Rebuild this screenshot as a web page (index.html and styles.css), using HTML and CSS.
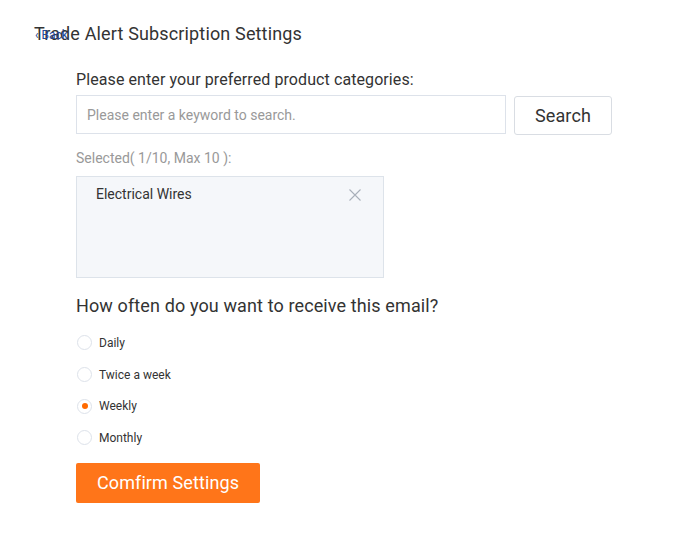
FILE: index.html
```html
<!DOCTYPE html>
<html>
<head>
<meta charset="utf-8">
<link rel="stylesheet" href="styles.css">
</head>
<body>
<div class="page">
  <div class="header">
    <a class="back" href="#">&lsaquo; Back</a>
    <h1 class="title">Trade Alert Subscription Settings</h1>
  </div>
  <div class="content">
    <div class="label">Please enter your preferred product categories:</div>
    <div class="search-row">
      <input class="search-input" type="text" placeholder="Please enter a keyword to search.">
      <button class="search-btn">Search</button>
    </div>
    <div class="selected-label">Selected( 1/10, Max 10 ):</div>
    <div class="selected-box">
      <div class="tag">
        <span>Electrical Wires</span>
        <svg class="close" width="12" height="12" viewBox="0 0 12 12"><path d="M0.5 0.5 L11.5 11.5 M11.5 0.5 L0.5 11.5" stroke="#a9b0ba" stroke-width="1.1" fill="none"/></svg>
      </div>
    </div>
    <div class="question">How often do you want to receive this email?</div>
    <div class="radios">
      <label class="radio"><span class="dot"></span>Daily</label>
      <label class="radio"><span class="dot"></span>Twice a week</label>
      <label class="radio"><span class="dot checked"></span>Weekly</label>
      <label class="radio"><span class="dot"></span>Monthly</label>
    </div>
    <button class="confirm">Comfirm Settings</button>
  </div>
</div>
</body>
</html>
```
FILE: styles.css
```css
* { box-sizing: border-box; }
html, body { margin: 0; padding: 0; background: #fff; }
body { font-family: Roboto, "Liberation Sans", Arial, sans-serif; color: #333; }
.page { padding: 22px 0 0 0; }
.header { position: relative; padding-left: 34px; height: 24px; }
.back {
  position: absolute; left: 35px; top: 6px;
  font-size: 12px; color: #24489a; text-decoration: none; line-height: 14px;
}
.title { margin: 0; font-size: 18px; font-weight: 400; line-height: 23px; color: #333; letter-spacing: 0.15px; }
.content { padding: 24px 0 0 76px; }
.label { font-size: 16px; line-height: 19px; color: #333; letter-spacing: 0.09px; }
.search-row { display: flex; align-items: flex-start; margin-top: 6px; }
.search-input {
  width: 430px; height: 39px; border: 1px solid #dde2ea; border-radius: 0;
  padding: 0 10px; font-family: inherit; font-size: 14px; color: #333; outline: none;
}
.search-input::placeholder { color: #999; }
.search-btn {
  margin-left: 8px; margin-top: 1px; width: 98px; height: 39px;
  border: 1px solid #d9dde3; border-radius: 3px; background: #fff;
  font-family: inherit; font-size: 18px; color: #333; padding: 0; letter-spacing: 0.1px;
}
.selected-label { margin-top: 15px; font-size: 14px; line-height: 16px; color: #999; }
.selected-box {
  margin-top: 10px; width: 308px; height: 102px;
  background: #f5f7fa; border: 1px solid #dde3ea; padding: 9px 22px 0 19px;
}
.tag { display: flex; justify-content: space-between; align-items: center; font-size: 14px; line-height: 16px; color: #333; }
.close { margin-top: 1px; }
.question { margin-top: 17px; font-size: 18px; line-height: 22px; color: #333; letter-spacing: 0.12px; }
.radios { display: flex; flex-direction: column; gap: 10px; margin-top: 15px; }
.radio { display: flex; align-items: center; height: 21.7px; font-size: 12px; color: #333; }
.dot {
  width: 15px; height: 15px; border-radius: 50%; border: 1px solid #dde2ea;
  background: #fff; margin-right: 7px; margin-left: 1px; position: relative;
}
.dot.checked::after {
  content: ""; position: absolute; left: 3.5px; top: 3.5px; width: 6px; height: 6px;
  border-radius: 50%; background: #ff6a00;
}
.confirm {
  margin-top: 14px; width: 184px; height: 40px; border: none; border-radius: 2px;
  background: #ff7519; color: #fff; font-family: inherit; font-size: 18px; padding: 0; letter-spacing: 0.1px;
}
```
